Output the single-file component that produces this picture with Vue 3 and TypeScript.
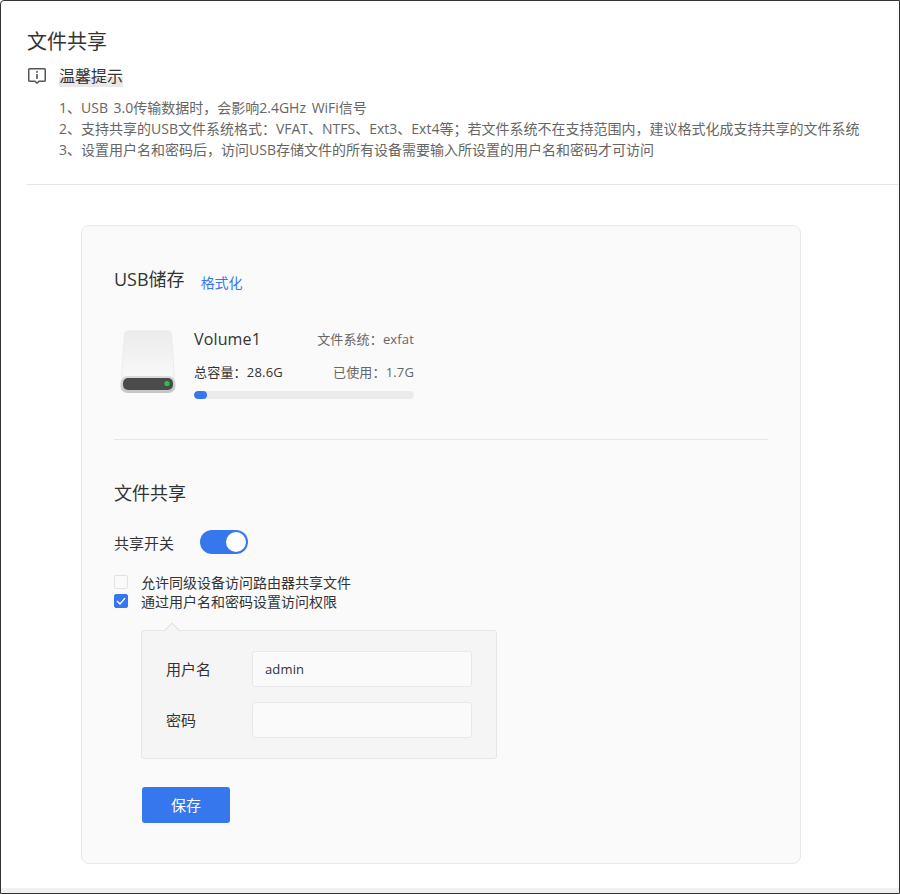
<script setup lang="ts">
const tips: string[] = [
  '1、USB 3.0传输数据时，会影响2.4GHz WiFi信号',
  '2、支持共享的USB文件系统格式：VFAT、NTFS、Ext3、Ext4等；若文件系统不在支持范围内，建议格式化成支持共享的文件系统',
  '3、设置用户名和密码后，访问USB存储文件的所有设备需要输入所设置的用户名和密码才可访问',
]
const usedPercent = 6
</script>

<template>
  <div class="frame">
    <main class="page">
      <section class="head">
        <h1 class="title">文件共享</h1>
        <div class="tip-head">
          <svg class="tip-icon" width="18" height="16" viewBox="0 0 18 16" fill="none">
            <path d="M1.5 0.75H16.5A0.75 .75 0 0 1 17.25 1.5V12.5A.75 .75 0 0 1 16.5 13.25H11L9 15.2L7 13.25H1.5A.75 .75 0 0 1 .75 12.5V1.5A.75 .75 0 0 1 1.5 .75Z" stroke="#555" stroke-width="1.5" />
            <rect x="8.2" y="3" width="1.6" height="1.8" fill="#555" />
            <rect x="8.2" y="6" width="1.6" height="5" fill="#555" />
          </svg>
          <span class="tip-label">温馨提示</span>
        </div>
        <ul class="tips">
          <li v-for="t in tips" :key="t">{{ t }}</li>
        </ul>
      </section>

      <section class="card">
        <div class="usb-head">
          <h2 class="sub">USB储存</h2>
          <a class="link">格式化</a>
        </div>
        <div class="volume">
          <svg class="drive" width="56" height="64" viewBox="0 0 56 64">
            <defs>
              <linearGradient id="bodyGrad" x1="0" y1="0" x2="0" y2="1">
                <stop offset="0" stop-color="#ececec" />
                <stop offset="1" stop-color="#f8f8f8" />
              </linearGradient>
              <linearGradient id="baseGrad" x1="0" y1="0" x2="0" y2="1">
                <stop offset="0" stop-color="#dcdcdc" />
                <stop offset="1" stop-color="#c4c4c4" />
              </linearGradient>
            </defs>
            <path d="M4.5 5Q4.5 1 8.5 1H47.5Q51.5 1 51.5 5L54.5 48H1.5Z" fill="url(#bodyGrad)" stroke="#e4e4e4" stroke-width=".6" />
            <rect x="0.5" y="46" width="55" height="17" rx="7" fill="url(#baseGrad)" />
            <rect x="3" y="48" width="50" height="12" rx="5" fill="#4b4b4b" />
            <circle cx="47" cy="53.5" r="2.6" fill="#1fc84a" />
          </svg>
          <div class="vol-info">
            <div class="vol-row first">
              <span class="vol-name">Volume1</span>
              <span class="vol-meta raised">文件系统：exfat</span>
            </div>
            <div class="vol-row second">
              <span class="vol-cap">总容量：28.6G</span>
              <span class="vol-meta">已使用：1.7G</span>
            </div>
            <div class="bar"><div class="bar-fill" :style="{ width: usedPercent + '%' }"></div></div>
          </div>
        </div>
        <hr class="rule" />
        <h2 class="sub share-title">文件共享</h2>
        <div class="switch-row">
          <span class="switch-label">共享开关</span>
          <span class="switch"><span class="knob"></span></span>
        </div>
        <label class="check"><span class="box"></span>允许同级设备访问路由器共享文件</label>
        <label class="check">
          <span class="box on">
            <svg width="10" height="8" viewBox="0 0 10 8" fill="none"><path d="M1 4L4 7L9 1.2" stroke="#fff" stroke-width="1.3" /></svg>
          </span>通过用户名和密码设置访问权限
        </label>
        <div class="auth">
          <span class="arrow"></span>
          <div class="field">
            <span class="field-label">用户名</span>
            <div class="input">admin</div>
          </div>
          <div class="field">
            <span class="field-label">密码</span>
            <div class="input"></div>
          </div>
        </div>
        <button class="save" type="button">保存</button>
      </section>
    </main>
    <div class="bottom-band"></div>
  </div>
</template>

<style scoped>
.frame {
  box-sizing: border-box;
  width: 900px;
  height: 894px;
  border: 1px solid #333;
  border-top-left-radius: 4px;
  background: #fff;
  display: flex;
  flex-direction: column;
  overflow: hidden;
  font-family: "Open Sans", "Noto Sans CJK SC", sans-serif;
  color: #333;
}
.page {
  flex: 1;
  padding-left: 26px;
  min-height: 0;
}
.head {
  padding-top: 27px;
  height: 184px;
  box-sizing: border-box;
  border-bottom: 1px solid #e6e6e6;
}
.title {
  margin: 0;
  font-size: 20px;
  font-weight: 400;
  line-height: 28px;
}
.tip-head {
  display: flex;
  align-items: center;
  margin-top: 8px;
  height: 24px;
}
.tip-icon {
  margin-left: 1px;
}
.tip-label {
  margin-left: 13px;
  font-size: 16px;
  line-height: 22px;
  background: linear-gradient(to bottom, transparent 55%, #e8e8e8 55%);
}
.tips {
  list-style: none;
  margin: 9px 0 0 32px;
  padding: 0;
  font-size: 14px;
  line-height: 21px;
  word-spacing: 2px;
  color: #666;
  white-space: nowrap;
}
.card {
  box-sizing: border-box;
  width: 720px;
  height: 639px;
  margin: 40px 0 0 54px;
  padding: 39px 32px 0;
  background: #fafafa;
  border: 1px solid #e8e8e8;
  border-radius: 8px;
}
.usb-head {
  display: flex;
  align-items: baseline;
  height: 28px;
}
.sub {
  margin: 0;
  font-size: 18px;
  font-weight: 400;
  line-height: 28px;
}
.link {
  margin-left: 16px;
  font-size: 14px;
  color: #3777ee;
  position: relative;
  top: 2px;
}
.volume {
  display: flex;
  margin-top: 37px;
  padding-left: 6px;
}
.drive {
  display: block;
  flex: none;
}
.vol-info {
  margin-left: 18px;
  width: 220px;
  margin-top: -3px;
}
.vol-row {
  display: flex;
  justify-content: space-between;
  align-items: center;
  white-space: nowrap;
}
.first {
  height: 24px;
}
.second {
  height: 24px;
  margin-top: 8px;
}
.vol-name {
  font-size: 16px;
  letter-spacing: 0.15px;
}
.vol-meta {
  font-size: 13px;
  letter-spacing: 0.15px;
  color: #666;
}
.raised {
  padding-bottom: 2px;
}
.vol-cap {
  font-size: 13px;
  letter-spacing: 0.2px;
}
.bar {
  height: 8px;
  margin-top: 8px;
  border-radius: 4px;
  background: #ebebeb;
  overflow: hidden;
}
.bar-fill {
  height: 100%;
  border-radius: 4px;
  background: #3777ee;
}
.rule {
  margin: 40px 0 0;
  border: 0;
  border-top: 1px solid #e6e6e6;
}
.share-title {
  margin-top: 39px;
}
.switch-row {
  display: flex;
  align-items: center;
  margin-top: 23px;
  height: 24px;
}
.switch-label {
  width: 86px;
  font-size: 15px;
}
.switch {
  position: relative;
  display: block;
  width: 48px;
  height: 24px;
  border-radius: 12px;
  background: #3777ee;
}
.knob {
  position: absolute;
  right: 2px;
  top: 2px;
  width: 20px;
  height: 20px;
  border-radius: 50%;
  background: #fff;
}
.check {
  display: flex;
  align-items: center;
  height: 19px;
  font-size: 14px;
  line-height: 19px;
}
.switch-row + .check {
  margin-top: 19px;
}
.box {
  box-sizing: border-box;
  flex: none;
  width: 14px;
  height: 14px;
  margin-top: -2px;
  margin-right: 13px;
  border: 1px solid #e2e2e2;
  border-radius: 2px;
  background: #fafafa;
  display: flex;
  align-items: center;
  justify-content: center;
}
.box.on {
  background: #3777ee;
  border-color: #3777ee;
}
.auth {
  position: relative;
  box-sizing: border-box;
  width: 356px;
  height: 129px;
  margin: 19px 0 0 27px;
  padding: 20px 24px 0;
  background: #f5f5f5;
  border: 1px solid #e6e6e6;
  border-radius: 3px;
}
.arrow {
  position: absolute;
  left: 24px;
  top: -6px;
  width: 11px;
  height: 11px;
  border-top: 1px solid #e2e2e2;
  border-left: 1px solid #e2e2e2;
  transform: rotate(45deg);
  background: #f5f5f5;
}
.field {
  display: flex;
  align-items: center;
}
.field + .field {
  margin-top: 15px;
}
.field-label {
  width: 86px;
  font-size: 15px;
  padding-bottom: 2px;
}
.input {
  box-sizing: border-box;
  width: 220px;
  height: 36px;
  padding-left: 12px;
  font-size: 13px;
  line-height: 34px;
  letter-spacing: 0.15px;
  background: #fafafa;
  border: 1px solid #e8e8e8;
  border-radius: 3px;
}
.save {
  display: block;
  width: 88px;
  height: 36px;
  margin: 28px 0 0 28px;
  padding: 0 0 2px;
  border: 0;
  border-radius: 3px;
  background: #3777ee;
  color: #fff;
  font: inherit;
  font-size: 15px;
}
.bottom-band {
  flex: none;
  height: 5px;
  background: #f0f0f0;
}
</style>
